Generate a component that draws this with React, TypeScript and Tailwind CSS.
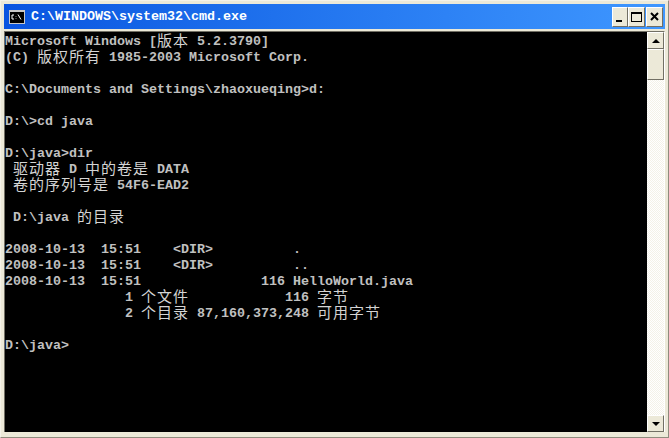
const lines = [
  'Microsoft Windows [版本 5.2.3790]',
  '(C) 版权所有 1985-2003 Microsoft Corp.',
  '',
  'C:\\Documents and Settings\\zhaoxueqing>d:',
  '',
  'D:\\>cd java',
  '',
  'D:\\java>dir',
  ' 驱动器 D 中的卷是 DATA',
  ' 卷的序列号是 54F6-EAD2',
  '',
  ' D:\\java 的目录',
  '',
  '2008-10-13  15:51    <DIR>          .',
  '2008-10-13  15:51    <DIR>          ..',
  '2008-10-13  15:51               116 HelloWorld.java',
  '               1 个文件            116 字节',
  '               2 个目录 87,160,373,248 可用字节',
  '',
  'D:\\java>',
];

// CJK runs keep a 16px pitch so each glyph takes two 8px console cells
function ConsoleLine({ text }: { text: string }) {
  const parts = text.split(/([\u4e00-\u9fff]+)/);
  return (
    <div className="h-4 leading-4 whitespace-pre">
      {parts.map((p, i) =>
        i % 2 === 1 ? (
          <span key={i} className="align-[-1px] font-['Noto_Sans_CJK_SC',sans-serif] text-[15px] leading-[0] font-normal tracking-[1px] text-[#d4d4d4]">
            {p}
          </span>
        ) : (
          <span key={i}>{p}</span>
        )
      )}
    </div>
  );
}

function CaptionButton({ children, className }: { children: React.ReactNode; className?: string }) {
  return (
    <div
      className={`flex h-[20px] items-center justify-center border border-t-white border-l-white border-r-[#716f64] border-b-[#716f64] bg-[#ece9d8] ${className}`}
    >
      {children}
    </div>
  );
}

function CmdIcon() {
  return (
    <svg width="16" height="14" viewBox="0 0 16 14" className="shrink-0">
      <rect x="0" y="0" width="16" height="14" fill="#c8c8c8" />
      <rect x="1" y="2" width="14" height="11" fill="#000" />
      <path d="M4 5H3V9H4M7 6V6.5M7 8V8.5M9 4.5L12 9.5" stroke="#fff" strokeWidth="1" fill="none" />
      <path d="M4 5H5M4 9H5" stroke="#fff" strokeWidth="1" />
    </svg>
  );
}

export default function App() {
  return (
    <div className="flex h-[438px] w-[669px] flex-col border border-t-[#f4f2e8] border-l-[#f4f2e8] border-r-[#8f8c7d] border-b-[#8f8c7d] bg-[#ece9d8] pt-[3px] pr-[3px] pb-[5px] pl-[3px]">
      {/* Title bar */}
      <div className="flex h-[25px] shrink-0 items-center bg-gradient-to-r from-[#0a55e0] to-[#3f97ff] pr-[2px] pl-[5px]">
        <CmdIcon />
        <span className="ml-[6px] font-['Liberation_Mono',monospace] text-[13.33px] font-bold text-white">
          C:\WINDOWS\system32\cmd.exe
        </span>
        <div className="ml-auto flex items-center">
          <CaptionButton className="w-[16px]">
            <div className="mt-[9px] mr-[2px] h-[2px] w-[6px] bg-black" />
          </CaptionButton>
          <CaptionButton className="w-[17px]">
            <div className="h-[10px] w-[11px] border border-t-2 border-black" />
          </CaptionButton>
          <CaptionButton className="ml-[1px] w-[17px]">
            <svg width="9" height="9" viewBox="0 0 9 9">
              <path d="M1 1L8 8M8 1L1 8" stroke="#000" strokeWidth="2" fill="none" />
            </svg>
          </CaptionButton>
        </div>
      </div>

      {/* Console area */}
      <div className="mt-[2px] flex min-h-0 flex-1 border-t border-l border-t-[#716f64] border-l-[#716f64] border-r border-r-white">
        <div className="min-w-0 flex-1 bg-black pt-[2px] font-['Liberation_Mono','Noto_Sans_CJK_SC',monospace] text-[13.33px] font-bold text-[#c0c0c0]">
          {lines.map((l, i) => (
            <ConsoleLine key={i} text={l} />
          ))}
        </div>

        {/* Scrollbar */}
        <div className="flex w-[17px] shrink-0 flex-col bg-[repeating-conic-gradient(#f4f2e8_0_25%,#ffffff_0_50%)] bg-[length:2px_2px]">
          <div className="flex h-[17px] shrink-0 items-center justify-center border border-t-white border-l-white border-r-[#716f64] border-b-[#716f64] bg-[#ece9d8]">
            <div className="h-0 w-0 border-r-[4px] border-b-[4px] border-l-[4px] border-r-transparent border-b-black border-l-transparent" />
          </div>
          <div className="h-[31px] shrink-0 border border-t-white border-l-white border-r-[#716f64] border-b-[#716f64] bg-[#ece9d8]" />
          <div className="mt-auto flex h-[17px] shrink-0 items-center justify-center border border-t-white border-l-white border-r-[#716f64] border-b-[#716f64] bg-[#ece9d8]">
            <div className="h-0 w-0 border-t-[4px] border-r-[4px] border-l-[4px] border-t-black border-r-transparent border-l-transparent" />
          </div>
        </div>
      </div>
    </div>
  );
}
